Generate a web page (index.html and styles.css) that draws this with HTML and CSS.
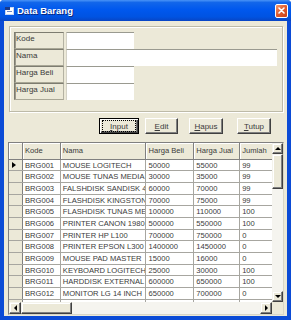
FILE: index.html
```html
<!DOCTYPE html>
<html lang="id">
<head>
    <meta charset="UTF-8">
    <title>Data Barang</title>
    <link rel="stylesheet" href="styles.css">
</head>
<body>
    <div class="window">
        <!-- Title bar -->
        <div class="titlebar">
            <svg class="app-icon" width="9" height="8" viewBox="0 0 9 8">
                <rect x="0.5" y="0.5" width="8" height="7" fill="#fff" stroke="#c8d6f0"/>
                <rect x="0" y="0" width="5" height="3" fill="#1a3a8a"/>
                <rect x="2" y="4" width="5" height="1" fill="#6d86c4"/>
            </svg>
            <span class="title">Data Barang</span>
            <span class="close">
                <svg width="7" height="7" viewBox="0 0 7 7">
                    <path d="M1 1 L6 6 M6 1 L1 6" stroke="#fff" stroke-width="1.6" stroke-linecap="round"/>
                </svg>
            </span>
        </div>

        <div class="client">
            <!-- Entry fields -->
            <div class="frame">
                <div class="field"><span class="label">Kode</span><span class="input"></span></div>
                <div class="field"><span class="label">Nama</span><span class="input wide"></span></div>
                <div class="field"><span class="label">Harga Beli</span><span class="input"></span></div>
                <div class="field"><span class="label">Harga Jual</span><span class="input"></span></div>
            </div>

            <!-- Command buttons -->
            <div class="buttons">
                <button class="btn default btn-input"><span class="focus"><u>I</u>nput</span></button>
                <button class="btn btn-edit"><span><u>E</u>dit</span></button>
                <button class="btn btn-hapus"><span><u>H</u>apus</span></button>
                <button class="btn btn-tutup"><span><u>T</u>utup</span></button>
            </div>

            <!-- Data grid -->
            <div class="grid">
                <div class="table">
                    <div class="row head">
                        <span class="cell sel"></span>
                        <span class="cell c-kode">Kode</span>
                        <span class="cell c-nama">Nama</span>
                        <span class="cell c-beli">Harga Beli</span>
                        <span class="cell c-jual">Harga Jual</span>
                        <span class="cell c-jml">Jumlah</span>
                    </div>
                    <div class="row"><span class="cell sel"><i class="pointer"></i></span><span class="cell c-kode">BRG001</span><span class="cell c-nama">MOUSE LOGITECH</span><span class="cell c-beli">50000</span><span class="cell c-jual">55000</span><span class="cell c-jml">99</span></div>
                    <div class="row"><span class="cell sel"></span><span class="cell c-kode">BRG002</span><span class="cell c-nama">MOUSE TUNAS MEDIA</span><span class="cell c-beli">30000</span><span class="cell c-jual">35000</span><span class="cell c-jml">99</span></div>
                    <div class="row"><span class="cell sel"></span><span class="cell c-kode">BRG003</span><span class="cell c-nama">FALSHDISK SANDISK 4GB</span><span class="cell c-beli">60000</span><span class="cell c-jual">70000</span><span class="cell c-jml">99</span></div>
                    <div class="row"><span class="cell sel"></span><span class="cell c-kode">BRG004</span><span class="cell c-nama">FLASHDISK KINGSTON 8GB</span><span class="cell c-beli">70000</span><span class="cell c-jual">75000</span><span class="cell c-jml">99</span></div>
                    <div class="row"><span class="cell sel"></span><span class="cell c-kode">BRG005</span><span class="cell c-nama">FLASHDISK TUNAS MEDIA</span><span class="cell c-beli">100000</span><span class="cell c-jual">110000</span><span class="cell c-jml">100</span></div>
                    <div class="row"><span class="cell sel"></span><span class="cell c-kode">BRG006</span><span class="cell c-nama">PRINTER CANON 1980</span><span class="cell c-beli">500000</span><span class="cell c-jual">550000</span><span class="cell c-jml">100</span></div>
                    <div class="row"><span class="cell sel"></span><span class="cell c-kode">BRG007</span><span class="cell c-nama">PRINTER HP L100</span><span class="cell c-beli">700000</span><span class="cell c-jual">750000</span><span class="cell c-jml">0</span></div>
                    <div class="row"><span class="cell sel"></span><span class="cell c-kode">BRG008</span><span class="cell c-nama">PRINTER EPSON L300</span><span class="cell c-beli">1400000</span><span class="cell c-jual">1450000</span><span class="cell c-jml">0</span></div>
                    <div class="row"><span class="cell sel"></span><span class="cell c-kode">BRG009</span><span class="cell c-nama">MOUSE PAD MASTER</span><span class="cell c-beli">15000</span><span class="cell c-jual">16000</span><span class="cell c-jml">0</span></div>
                    <div class="row"><span class="cell sel"></span><span class="cell c-kode">BRG010</span><span class="cell c-nama">KEYBOARD LOGITECH</span><span class="cell c-beli">25000</span><span class="cell c-jual">30000</span><span class="cell c-jml">100</span></div>
                    <div class="row"><span class="cell sel"></span><span class="cell c-kode">BRG011</span><span class="cell c-nama">HARDDISK EXTERNAL</span><span class="cell c-beli">600000</span><span class="cell c-jual">650000</span><span class="cell c-jml">100</span></div>
                    <div class="row"><span class="cell sel"></span><span class="cell c-kode">BRG012</span><span class="cell c-nama">MONITOR LG 14 INCH</span><span class="cell c-beli">650000</span><span class="cell c-jual">700000</span><span class="cell c-jml">0</span></div>
                    <div class="row"><span class="cell sel"></span><span class="cell c-kode">BRG013</span><span class="cell c-nama">MONITOR LG 16 INCH</span><span class="cell c-beli">800000</span><span class="cell c-jual">850000</span><span class="cell c-jml">0</span></div>
                </div>

                <div class="vscroll">
                    <span class="sb-btn"><i class="arrow up"></i></span>
                    <span class="sb-thumb v"></span>
                    <span class="sb-track"></span>
                    <span class="sb-btn"><i class="arrow down"></i></span>
                </div>
                <div class="hscroll">
                    <span class="sb-btn"><i class="arrow left"></i></span>
                    <span class="sb-thumb h"></span>
                    <span class="sb-track"></span>
                    <span class="sb-btn"><i class="arrow right"></i></span>
                </div>
                <div class="corner"></div>
            </div>
        </div>
    </div>
</body>
</html>
```

FILE: styles.css
```css
:root {
    --face: #ece9d8;
    --shadow: #808080;
    --dark: #404040;
    --line: #a7a6a0;
    --text: #3a3a3a;
}

* {
    box-sizing: border-box;
    margin: 0;
    padding: 0;
}

body {
    font-family: "Liberation Sans", Arial, sans-serif;
    font-size: 8px;
    color: var(--text);
    background: #fff;
}

.window {
    width: 291px;
    height: 320px;
    display: flex;
    flex-direction: column;
    background: #0b4bd6;
    border-radius: 4px 4px 0 0;
    overflow: hidden;
}

/* Title bar */
.titlebar {
    flex: none;
    height: 21px;
    display: flex;
    align-items: center;
    padding: 0 3px 0 5px;
    background: linear-gradient(#4a94f7, #1266ea 12%, #0058ee 45%, #0053e2 80%, #0845c4);
    color: #fff;
}

.app-icon {
    margin-right: 3px;
}

.title {
    flex: 1;
    font-size: 9.5px;
    font-weight: bold;
    text-shadow: 1px 1px #0b2a80;
}

.close {
    width: 13px;
    height: 14px;
    border: 1px solid #fff;
    border-radius: 2px;
    background: linear-gradient(135deg, #f29a72, #e05a2c 50%, #c8401a);
    display: flex;
    align-items: center;
    justify-content: center;
}

/* Window body */
.client {
    flex: 1;
    min-height: 0;
    margin: 0 4px 4px;
    background: var(--face);
    display: flex;
    flex-direction: column;
}

.frame {
    flex: none;
    height: 86px;
    margin: 5px 4px 0 5px;
    padding: 5px 0 0 4px;
    border: 1px solid #bdbaa8;
    box-shadow: inset 1px 1px #fff, 1px 1px #fff;
}

.field {
    display: flex;
    height: 17px;
}

.label {
    width: 50px;
    padding: 0 1px;
    line-height: 12px;
    border: 1px solid;
    border-color: #7d7c70 #b4b2a3 #a9a796 #7d7c70;
    box-shadow: inset 1px 0 #9c9a8c;
}

.input {
    width: 68px;
    margin-left: 2px;
    background: #fff;
    border-top: 1px solid #9a9a90;
    border-left: 1px solid #d4d2c6;
}

.input.wide {
    width: 211px;
}

/* Buttons */
.buttons {
    flex: none;
    display: flex;
    height: 16px;
    margin: 6px 0 0 95px;
}

.btn {
    height: 16px;
    background: var(--face);
    border: 1px solid;
    border-color: #fff var(--dark) var(--dark) #fff;
    box-shadow: inset -1px -1px var(--shadow);
    font-family: inherit;
    font-size: 8px;
    color: var(--text);
    display: flex;
    align-items: center;
    justify-content: center;
}

.btn.default {
    border-color: #000;
    box-shadow: inset 1px 1px #fff, inset -1px -1px var(--dark), inset -2px -2px var(--shadow);
}

.btn .focus {
    display: flex;
    align-items: center;
    justify-content: center;
    width: 32px;
    height: 10px;
    outline: 1px dotted #000;
}

.btn-input { width: 40px; }
.btn-edit { width: 33px; margin-left: 6px; }
.btn-hapus { width: 34px; margin-left: 11px; }
.btn-tutup { width: 34px; margin-left: 14px; }

/* Grid */
.grid {
    flex: 1;
    min-height: 0;
    margin: 8px 3px 1px 4px;
    border: 1px solid;
    border-color: var(--shadow) #d8d6c8 #d8d6c8 var(--shadow);
    display: grid;
    grid-template-columns: 1fr 11px;
    grid-template-rows: minmax(0, 1fr) 12px;
    background: var(--face);
}

.table {
    min-height: 0;
    overflow: hidden;
    background: #fff;
    font-size: 7.6px;
}

.row {
    display: flex;
    height: 11.7px;
    line-height: 11px;
    border-bottom: 1px solid var(--line);
    white-space: nowrap;
}

.row.head {
    height: 16.5px;
    line-height: 15px;
    background: var(--face);
    border-bottom-color: var(--shadow);
}

.cell {
    overflow: hidden;
    padding-left: 2px;
    border-right: 1px solid var(--line);
}

.head .cell {
    box-shadow: inset 1px 1px #fff;
    border-right-color: var(--shadow);
}

.cell.sel {
    width: 14px;
    padding: 0;
    background: var(--face);
    border-right-color: var(--shadow);
    display: flex;
    align-items: center;
}

.c-kode { width: 38px; }
.c-nama { width: 86px; }
.c-beli { width: 48px; }
.c-jual { width: 46px; }
.c-jml { width: 32px; border-right: none; }

.pointer {
    margin-left: 3px;
    border-top: 3px solid transparent;
    border-bottom: 3px solid transparent;
    border-left: 4px solid #000;
}

/* Scrollbars */
.vscroll,
.hscroll {
    display: flex;
    background: #f5f4ef;
}

.vscroll {
    flex-direction: column;
}

.sb-btn,
.sb-thumb {
    flex: none;
    background: var(--face);
    border: 1px solid;
    border-color: #f4f3ec var(--dark) var(--dark) #f4f3ec;
    box-shadow: inset -1px -1px var(--shadow), inset 1px 1px #fff;
    display: flex;
    align-items: center;
    justify-content: center;
}

.vscroll .sb-btn { height: 11px; }
.hscroll .sb-btn { width: 12px; }

.sb-thumb.v { height: 35px; }
.sb-thumb.h { width: 51px; }

.sb-track {
    flex: 1;
}

.corner {
    background: var(--face);
}

.arrow {
    width: 0;
    height: 0;
}

.arrow.up {
    border-left: 3px solid transparent;
    border-right: 3px solid transparent;
    border-bottom: 3px solid #000;
}

.arrow.down {
    border-left: 3px solid transparent;
    border-right: 3px solid transparent;
    border-top: 3px solid #000;
}

.arrow.left {
    border-top: 3px solid transparent;
    border-bottom: 3px solid transparent;
    border-right: 3px solid #000;
}

.arrow.right {
    border-top: 3px solid transparent;
    border-bottom: 3px solid transparent;
    border-left: 3px solid #000;
}
```
